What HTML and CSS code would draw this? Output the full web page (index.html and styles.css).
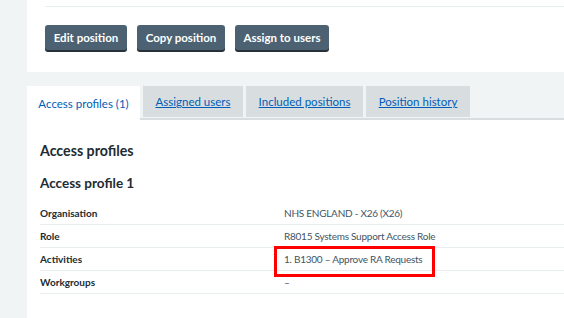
FILE: index.html
```html
<!DOCTYPE html>
<html>
<head>
    <meta charset="utf-8" />
    <title>Position</title>
    <link rel="stylesheet" href="styles.css">
</head>
<body>
    <div class="page">
        <div class="card">
            <div class="card-top"></div>
            <div class="actions">
                <button class="btn" type="button">Edit position</button>
                <button class="btn" type="button">Copy position</button>
                <button class="btn" type="button">Assign to users</button>
            </div>
        </div>

        <div class="tabs">
            <div class="tab tab-active">Access profiles (1)</div>
            <div class="tab"><a href="#">Assigned users</a></div>
            <div class="tab"><a href="#">Included positions</a></div>
            <div class="tab"><a href="#">Position history</a></div>
        </div>

        <div class="panel">
            <h2 class="title">Access profiles</h2>
            <h3 class="subtitle">Access profile 1</h3>
            <div class="rows">
                <div class="row">
                    <div class="key">Organisation</div>
                    <div class="value">NHS ENGLAND - X26 (X26)</div>
                </div>
                <div class="row">
                    <div class="key">Role</div>
                    <div class="value">R8015 Systems Support Access Role</div>
                </div>
                <div class="row">
                    <div class="key">Activities</div>
                    <div class="value">1. B1300 – Approve RA Requests</div>
                    <div class="highlight"></div>
                </div>
                <div class="row">
                    <div class="key">Workgroups</div>
                    <div class="value">–</div>
                </div>
            </div>
        </div>
    </div>
</body>
</html>
```

FILE: styles.css
```css
* {
    margin: 0;
    padding: 0;
    box-sizing: border-box;
}

body {
    background: #f0f4f5;
    font-family: Lato, "Noto Sans", sans-serif;
    color: #212b32;
    overflow: hidden;
}

.page {
    padding-left: 27px;
}

.card {
    background: #fff;
    padding: 0 0 20px 18px;
}

.card-top {
    height: 7px;
    border-bottom: 1px solid #e8edee;
}

.actions {
    display: flex;
    gap: 10px;
    margin-top: 18px;
}

.btn {
    height: 25px;
    margin-bottom: 2px;
    padding: 0 6px;
    background: #4c6272;
    color: #fff;
    border: none;
    border-radius: 3px;
    box-shadow: 0 2px 0 #263139;
    font-family: inherit;
    font-size: 11.5px;
    font-weight: 700;
    white-space: nowrap;
}

.actions .btn:nth-child(1) { width: 82px; }
.actions .btn:nth-child(2) { width: 88px; }
.actions .btn:nth-child(3) { width: 94px; }

.tabs {
    display: flex;
    gap: 3px;
    margin-top: 14px;
    height: 34px;
    border-bottom: 2px solid #d8dde0;
}

.tab {
    height: 31px;
    display: flex;
    align-items: center;
    justify-content: center;
    background: #d8dde0;
    font-size: 11.5px;
    white-space: nowrap;
}

.tab a {
    color: #005eb8;
}

.tab:nth-child(2) { width: 100px; }
.tab:nth-child(3) { width: 117px; }
.tab:nth-child(4) { width: 104px; }

.tab-active {
    width: 113px;
    background: #fff;
    color: #005eb8;
    margin-bottom: -2px;
    height: 36px;
    padding-bottom: 2px;
}

.panel {
    background: #fff;
    padding: 21px 0 30px 13px;
    min-height: 200px;
}

.title {
    font-size: 14.2px;
    font-weight: 700;
    line-height: 20px;
}

.subtitle {
    font-size: 13.5px;
    font-weight: 700;
    line-height: 18px;
    margin-top: 13px;
}

.rows {
    margin-top: 10px;
}

.row {
    position: relative;
    display: flex;
    height: 23px;
    padding-top: 5px;
    border-bottom: 1px solid #e8edee;
    font-size: 10px;
    line-height: 13px;
}

.key {
    width: 244px;
    font-weight: 700;
}

.value {
    color: #425563;
    font-size: 10px;
    letter-spacing: -0.25px;
}

.highlight {
    position: absolute;
    left: 234px;
    top: -2px;
    width: 161px;
    height: 31px;
    border: 3px solid #ff0000;
}
```
